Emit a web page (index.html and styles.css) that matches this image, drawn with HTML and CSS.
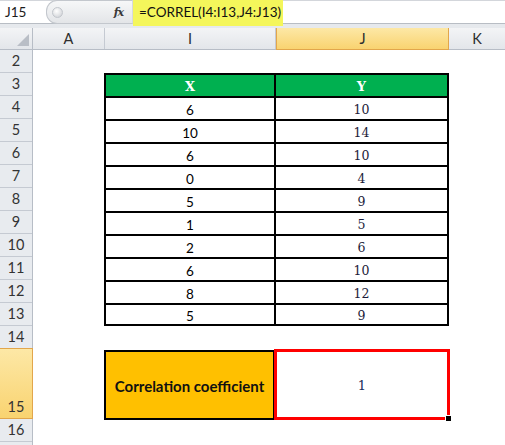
FILE: index.html
```html
<!DOCTYPE html>
<html>
<head>
<meta charset="utf-8">
<link rel="stylesheet" href="styles.css">
</head>
<body>
<div class="app">
  <div class="fbar">
    <div class="namebox">J15</div>
    <div class="grip"><span class="knob"></span><span class="fx">fx</span></div>
    <div class="formula"><span class="hl">=CORREL(I4:I13,J4:J13)</span></div>
  </div>
  <div class="gap"></div>
  <div class="colheads">
    <div class="corner"><svg width="12" height="12" viewBox="0 0 12 12"><polygon points="12,0 12,12 0,12" fill="#b9bec6"/></svg></div>
    <div class="ch col-a">A</div>
    <div class="ch col-i">I</div>
    <div class="ch col-j sel">J</div>
    <div class="ch col-k">K</div>
  </div>
  <div class="body">
    <div class="rownums">
      <div class="rn">2</div><div class="rn">3</div><div class="rn">4</div><div class="rn">5</div>
      <div class="rn">6</div><div class="rn">7</div><div class="rn">8</div><div class="rn">9</div>
      <div class="rn">10</div><div class="rn">11</div><div class="rn">12</div><div class="rn">13</div>
      <div class="rn">14</div><div class="rn tall sel">15</div><div class="rn">16</div><div class="rn"></div>
    </div>
    <div class="content">
      <div class="spacer"></div>
      <div class="data">
        <div class="tr head"><div class="td ci">X</div><div class="td cj">Y</div></div>
        <div class="tr"><div class="td ci">6</div><div class="td cj">10</div></div>
        <div class="tr"><div class="td ci">10</div><div class="td cj">14</div></div>
        <div class="tr"><div class="td ci">6</div><div class="td cj">10</div></div>
        <div class="tr"><div class="td ci">0</div><div class="td cj">4</div></div>
        <div class="tr"><div class="td ci">5</div><div class="td cj">9</div></div>
        <div class="tr"><div class="td ci">1</div><div class="td cj">5</div></div>
        <div class="tr"><div class="td ci">2</div><div class="td cj">6</div></div>
        <div class="tr"><div class="td ci">6</div><div class="td cj">10</div></div>
        <div class="tr"><div class="td ci">8</div><div class="td cj">12</div></div>
        <div class="tr last"><div class="td ci">5</div><div class="td cj">9</div></div>
      </div>
      <div class="spacer"></div>
      <div class="result">
        <div class="label">Correlation coefficient</div>
        <div class="value">1<span class="handle"></span></div>
      </div>
    </div>
  </div>
</div>
</body>
</html>
```

FILE: styles.css
```css
html, body {
  margin: 0;
  padding: 0;
  background: #ffffff;
}
.app {
  width: 505px;
  height: 445px;
  overflow: hidden;
  font-family: Lato, "Open Sans", sans-serif;
  color: #000;
}
/* formula bar */
.fbar {
  display: flex;
  height: 24px;
  box-sizing: border-box;
  border-top: 1px solid #d3d6db;
  border-bottom: 1px solid #b8bdc4;
  background: #fff;
}
.namebox {
  width: 46px;
  box-sizing: border-box;
  padding-left: 5px;
  font-size: 13.5px;
  line-height: 22px;
  color: #1b1b1b;
}
.grip {
  width: 87px;
  box-sizing: border-box;
  display: flex;
  align-items: center;
  justify-content: space-between;
  padding: 0 9px 0 5px;
  background: linear-gradient(#f6f7f8, #e3e5e8);
  border: 1px solid #c3c7cd;
  border-right: 1px solid #d6d9dd;
  border-radius: 11px 0 0 11px;
  margin-top: -1px;
  height: 24px;
}
.knob {
  width: 9px;
  height: 9px;
  border-radius: 50%;
  background: radial-gradient(circle at 40% 35%, #ffffff, #c9ccd1);
  border: 1px solid #c2c6cc;
}
.fx {
  font-family: "DejaVu Serif", serif;
  font-style: italic;
  font-weight: bold;
  font-size: 11px;
  color: #3a3a3a;
  letter-spacing: -1px;
}
.formula {
  flex: 1;
  display: flex;
}
.hl {
  display: block;
  width: 150px;
  height: 26px;
  margin-top: -1px;
  box-sizing: border-box;
  padding-left: 6px;
  background: #f4f65b;
  font-size: 13.5px;
  line-height: 25px;
  color: #111;
  position: relative;
  z-index: 1;
}
.gap {
  height: 4px;
  background: #e6e9ed;
}
/* column headers */
.colheads {
  display: flex;
  height: 22px;
  box-sizing: border-box;
  background: linear-gradient(#f3f4f6, #e3e6ea);
  border-bottom: 1px solid #b7bdc6;
}
.corner {
  width: 33px;
  box-sizing: border-box;
  border-right: 1px solid #b7bdc6;
  display: flex;
  align-items: flex-end;
  justify-content: flex-end;
  padding: 0 3px 3px 0;
}
.ch {
  box-sizing: border-box;
  border-right: 1px solid #c5cad2;
  text-align: center;
  font-size: 14.5px;
  line-height: 21px;
  color: #2e2e2e;
}
.col-a { width: 72px; }
.col-i { width: 171px; }
.col-j { width: 173px; }
.col-k { flex: 1; border-right: none; }
.ch.sel {
  background: linear-gradient(#fde8a6, #f9d370);
  border: 1px solid #e2a64b;
  border-top: none;
  margin-bottom: -1px;
  line-height: 21px;
}
/* body */
.body {
  display: flex;
}
.rownums {
  width: 33px;
  flex: none;
  background: #e8ebef;
  border-right: 1px solid #b7bdc6;
  box-sizing: border-box;
}
.rn {
  height: 23px;
  box-sizing: border-box;
  border-bottom: 1px solid #c5cad2;
  text-align: center;
  font-size: 14.5px;
  line-height: 22px;
  color: #333;
  display: flex;
  align-items: flex-end;
  justify-content: center;
}
.rn.tall {
  height: 70px;
}
.rn.sel {
  background: linear-gradient(#fde8a6, #f9d370);
  border-top: 1px solid #e2a64b;
  border-bottom: 1px solid #e2a64b;
  margin-top: -1px;
  height: 71px;
  margin-right: -1px;
  border-right: 1px solid #e2a64b;
}
.content {
  flex: 1;
  padding-left: 71px;
}
.spacer {
  height: 23px;
}
.data {
  width: 345px;
}
.tr {
  display: flex;
  height: 23px;
  box-sizing: border-box;
  border-top: 2px solid #000;
}
.tr.last {
  border-bottom: 2px solid #000;
}
.td {
  box-sizing: border-box;
  text-align: center;
  border-right: 2px solid #000;
  display: flex;
  align-items: center;
  justify-content: center;
  padding-top: 2px;
}
.ci {
  width: 172px;
  border-left: 2px solid #000;
  font-size: 13.5px;
}
.cj {
  width: 173px;
  font-family: "DejaVu Serif", serif;
  font-size: 12.5px;
  color: #1c1c3a;
}
.head .td {
  background: #00b050;
  color: #fff;
  font-family: "DejaVu Serif", serif;
  font-weight: bold;
  font-size: 13px;
  padding-top: 1px;
}
.result {
  display: flex;
  align-items: flex-end;
}
.label {
  width: 171px;
  height: 70px;
  box-sizing: border-box;
  background: #ffc000;
  border: 2px solid #000;
  display: flex;
  align-items: center;
  justify-content: center;
  font-weight: bold;
  font-size: 15px;
  color: #111;
  padding-top: 2px;
}
.value {
  position: relative;
  width: 176px;
  height: 71px;
  margin-left: -1px;
  box-sizing: border-box;
  border: 3px solid #ff0000;
  display: flex;
  align-items: center;
  justify-content: center;
  font-family: "DejaVu Serif", serif;
  font-size: 13px;
  color: #1c2f5a;
  padding-top: 2px;
}
.handle {
  position: absolute;
  right: -5px;
  bottom: -5px;
  width: 5px;
  height: 5px;
  background: #000;
  border: 1px solid #fff;
}
```
